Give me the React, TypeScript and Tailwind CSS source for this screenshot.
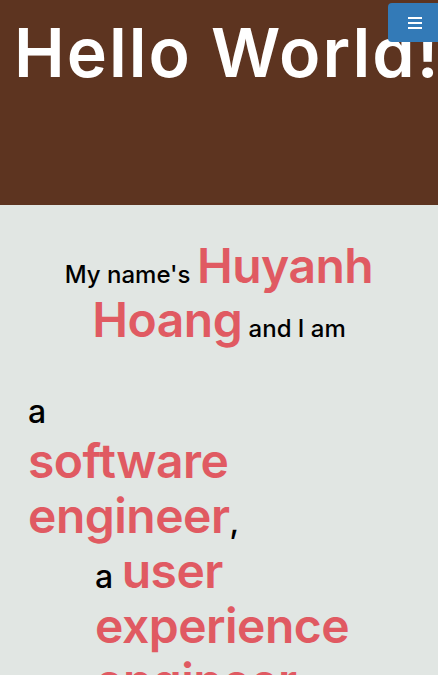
export default function App() {
  return (
    <div className="min-h-[675px] bg-[#e1e6e3] font-['Inter',sans-serif] overflow-hidden">
      <header className="relative h-[205px] bg-[#5d3420] overflow-hidden">
        <h1 className="pl-[14px] pt-[12px] text-[68px] leading-[80px] font-semibold text-white whitespace-nowrap tracking-[2px]">
          Hello World!
        </h1>
        <button className="absolute top-[3px] right-[-6px] w-[56px] h-[39px] rounded-[4px] bg-[#337ab7] flex flex-col items-start pl-[20px] justify-center gap-[3px]">
          <span className="block w-[14px] h-[2px] bg-white" />
          <span className="block w-[14px] h-[2px] bg-white" />
          <span className="block w-[14px] h-[2px] bg-white" />
        </button>
      </header>

      <section className="pt-[34px] text-center font-semibold text-[48px] leading-[54px]">
        <p>
          <span className="text-[24px] font-medium leading-none text-black">My name's </span>
          <span className="text-[#e05a62] tracking-[-0.5px]">Huyanh</span>
          <br />
          <span className="text-[#e05a62] tracking-[-0.5px]">Hoang</span>
          <span className="text-[24px] font-medium leading-none text-black"> and I am</span>
        </p>
      </section>

      <section className="pt-[31px] font-semibold text-[48px] leading-[55px] text-[#e05a62] tracking-[-0.5px]">
        <p className="pl-[28px]">
          <span className="text-[32px] font-medium leading-none text-black tracking-normal">a</span>
          <br />
          software
          <br />
          engineer
          <span className="text-[32px] font-medium leading-none text-black">,</span>
        </p>
        <p className="pl-[95px]">
          <span className="text-[32px] font-medium leading-none text-black tracking-normal">a </span>
          user
          <br />
          experience
          <br />
          engineer
        </p>
      </section>
    </div>
  );
}
